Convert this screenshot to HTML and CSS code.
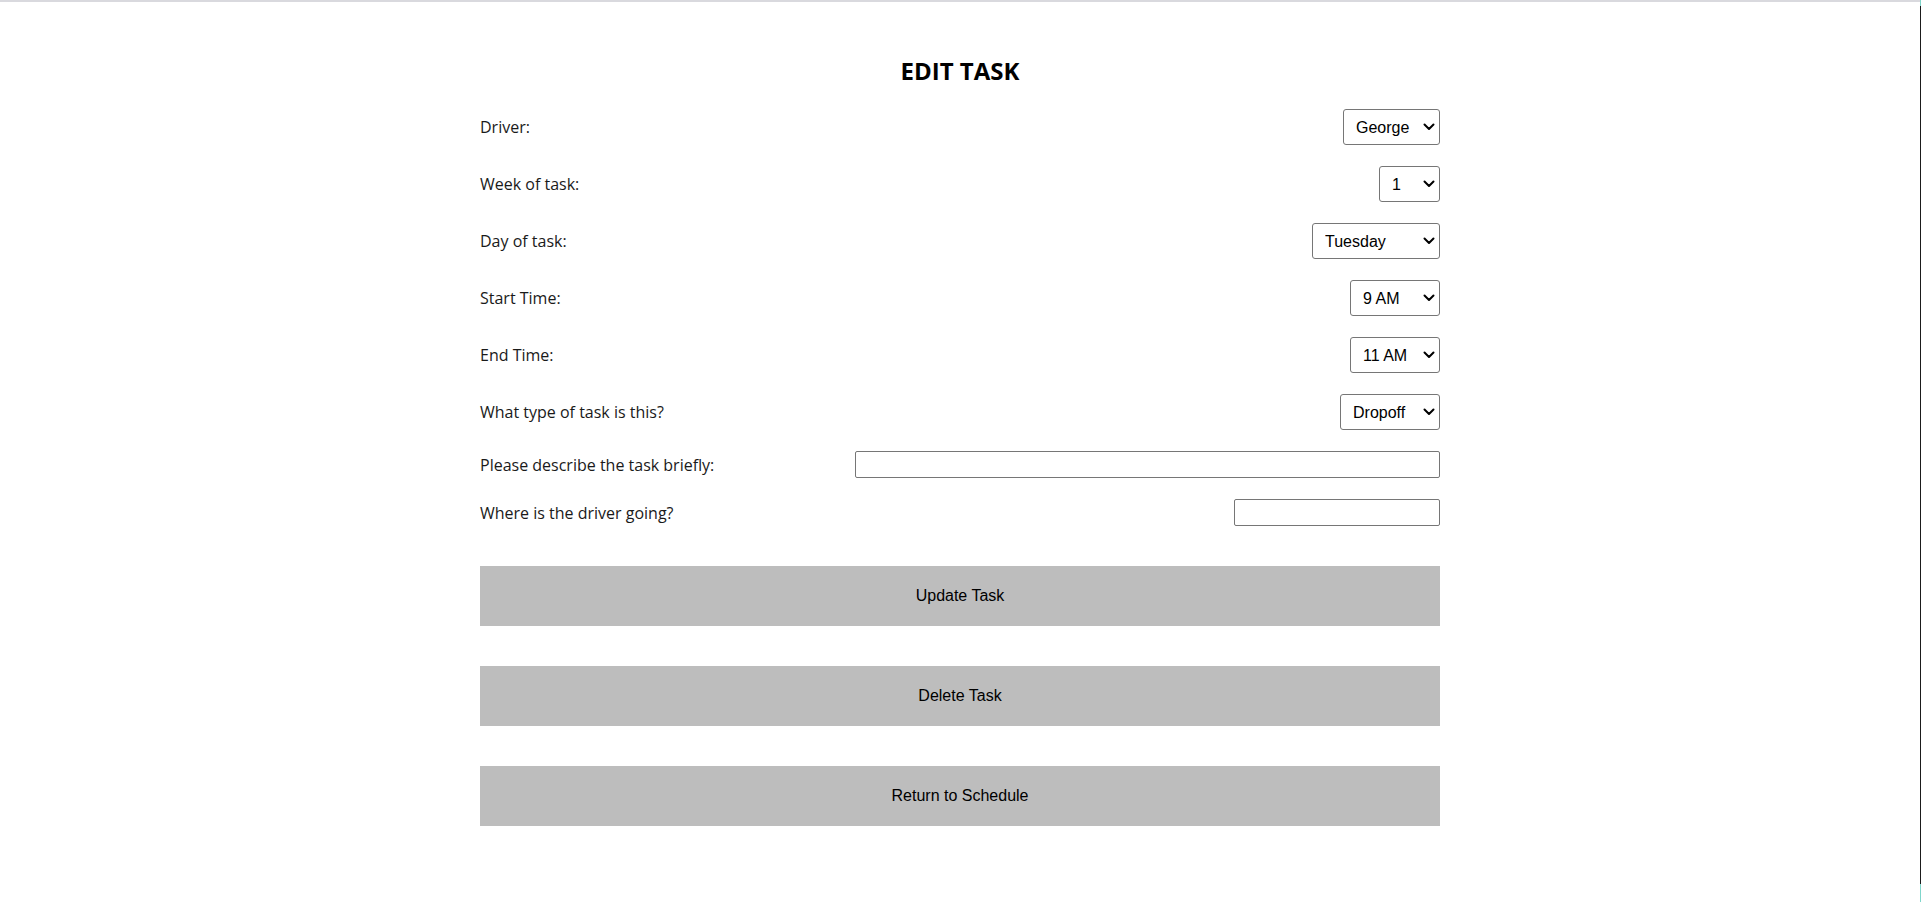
FILE: index.html
```html
<!DOCTYPE html>
<html lang="en">
<head>
<meta charset="utf-8">
<title>Edit Task</title>
<link rel="stylesheet" href="styles.css">
</head>
<body>
<div class="topline"></div>
<div class="edgeline"></div>
<main class="page">
  <h2 class="title">EDIT TASK</h2>
  <form class="form">
    <div class="row">
      <label class="label">Driver:</label>
      <select class="ctl">
        <option>George</option>
        <option>Anna</option>
        <option>Mike</option>
      </select>
    </div>
    <div class="row">
      <label class="label">Week of task:</label>
      <select class="ctl">
        <option>1</option><option>2</option><option>3</option><option>4</option>
        <option>5</option><option>6</option><option>7</option><option>8</option>
        <option>9</option><option>10</option><option>11</option><option>12</option>
      </select>
    </div>
    <div class="row">
      <label class="label">Day of task:</label>
      <select class="ctl">
        <option>Monday</option>
        <option selected>Tuesday</option>
        <option>Wednesday</option>
        <option>Thursday</option>
        <option>Friday</option>
        <option>Saturday</option>
        <option>Sunday</option>
      </select>
    </div>
    <div class="row">
      <label class="label">Start Time:</label>
      <select class="ctl">
        <option>8 AM</option><option selected>9 AM</option><option>10 AM</option>
        <option>11 AM</option><option>12 PM</option><option>1 PM</option>
      </select>
    </div>
    <div class="row">
      <label class="label">End Time:</label>
      <select class="ctl">
        <option>8 AM</option><option>9 AM</option><option>10 AM</option>
        <option selected>11 AM</option><option>12 PM</option><option>1 PM</option>
      </select>
    </div>
    <div class="row">
      <label class="label">What type of task is this?</label>
      <select class="ctl">
        <option>Dropoff</option>
        <option>Pickup</option>
        <option>Errands</option>
      </select>
    </div>
    <div class="row">
      <label class="label">Please describe the task briefly:</label>
      <input class="text text-wide" type="text">
    </div>
    <div class="row">
      <label class="label">Where is the driver going?</label>
      <input class="text text-short" type="text">
    </div>
    <div class="buttons">
      <button type="button" class="btn">Update Task</button>
      <button type="button" class="btn">Delete Task</button>
      <button type="button" class="btn">Return to Schedule</button>
    </div>
  </form>
</main>
</body>
</html>
```

FILE: styles.css
```css
html, body {
  margin: 0;
  padding: 0;
  background: #ffffff;
}

body {
  padding-right: 1px;
  font-family: "Open Sans", "Noto Sans", sans-serif;
  color: #1a1a1a;
}

.topline {
  height: 2px;
  background: #d9d9de;
}

.edgeline {
  position: fixed;
  top: 0;
  right: 0;
  width: 1px;
  height: 100%;
  background: linear-gradient(to bottom, #7fd6cb 0, #7fd6cb 6px, #1b1b1b 6px, #1b1b1b calc(100% - 18px), #7fd6cb calc(100% - 18px));
}

.page {
  width: 960px;
  margin: 0 auto;
  padding-top: 52px;
}

.title {
  margin: 0 0 22px;
  text-align: center;
  font-family: "Open Sans", sans-serif;
  font-weight: 700;
  font-size: 24px;
  line-height: 33px;
  color: #000;
}

.form {
  display: flex;
  flex-direction: column;
  gap: 21px;
}

.row {
  display: flex;
  align-items: center;
  justify-content: space-between;
}

.label {
  font-size: 16px;
  line-height: 22px;
  color: #1a1a1a;
}

.ctl {
  -webkit-appearance: none;
  appearance: none;
  font-family: "Liberation Sans", Arial, sans-serif;
  font-size: 16px;
  height: 36px;
  padding: 0 29px 0 12px;
  border: 1px solid #767676;
  border-radius: 3px;
  color: #000;
  background-color: #fff;
  background-image: url("data:image/svg+xml;utf8,<svg xmlns='http://www.w3.org/2000/svg' width='12' height='8' viewBox='0 0 12 8'><path d='M1.5 1.5 L6 6 L10.5 1.5' fill='none' stroke='black' stroke-width='2' stroke-linecap='round' stroke-linejoin='round'/></svg>");
  background-repeat: no-repeat;
  background-position: right 4px center;
  background-size: 12px 8px;
}

.text {
  box-sizing: border-box;
  height: 27px;
  border: 1px solid #767676;
  border-radius: 2px;
  padding: 2px 4px;
  font-family: "Liberation Sans", Arial, sans-serif;
  font-size: 16px;
  background: #fff;
}

.text-wide {
  width: 585px;
}

.text-short {
  width: 206px;
}

.buttons {
  display: flex;
  flex-direction: column;
  gap: 40px;
  margin-top: 19px;
}

.btn {
  height: 60px;
  width: 100%;
  border: none;
  background: #bdbdbd;
  font-family: "Liberation Sans", Arial, sans-serif;
  font-size: 16px;
  color: #000;
}
```
